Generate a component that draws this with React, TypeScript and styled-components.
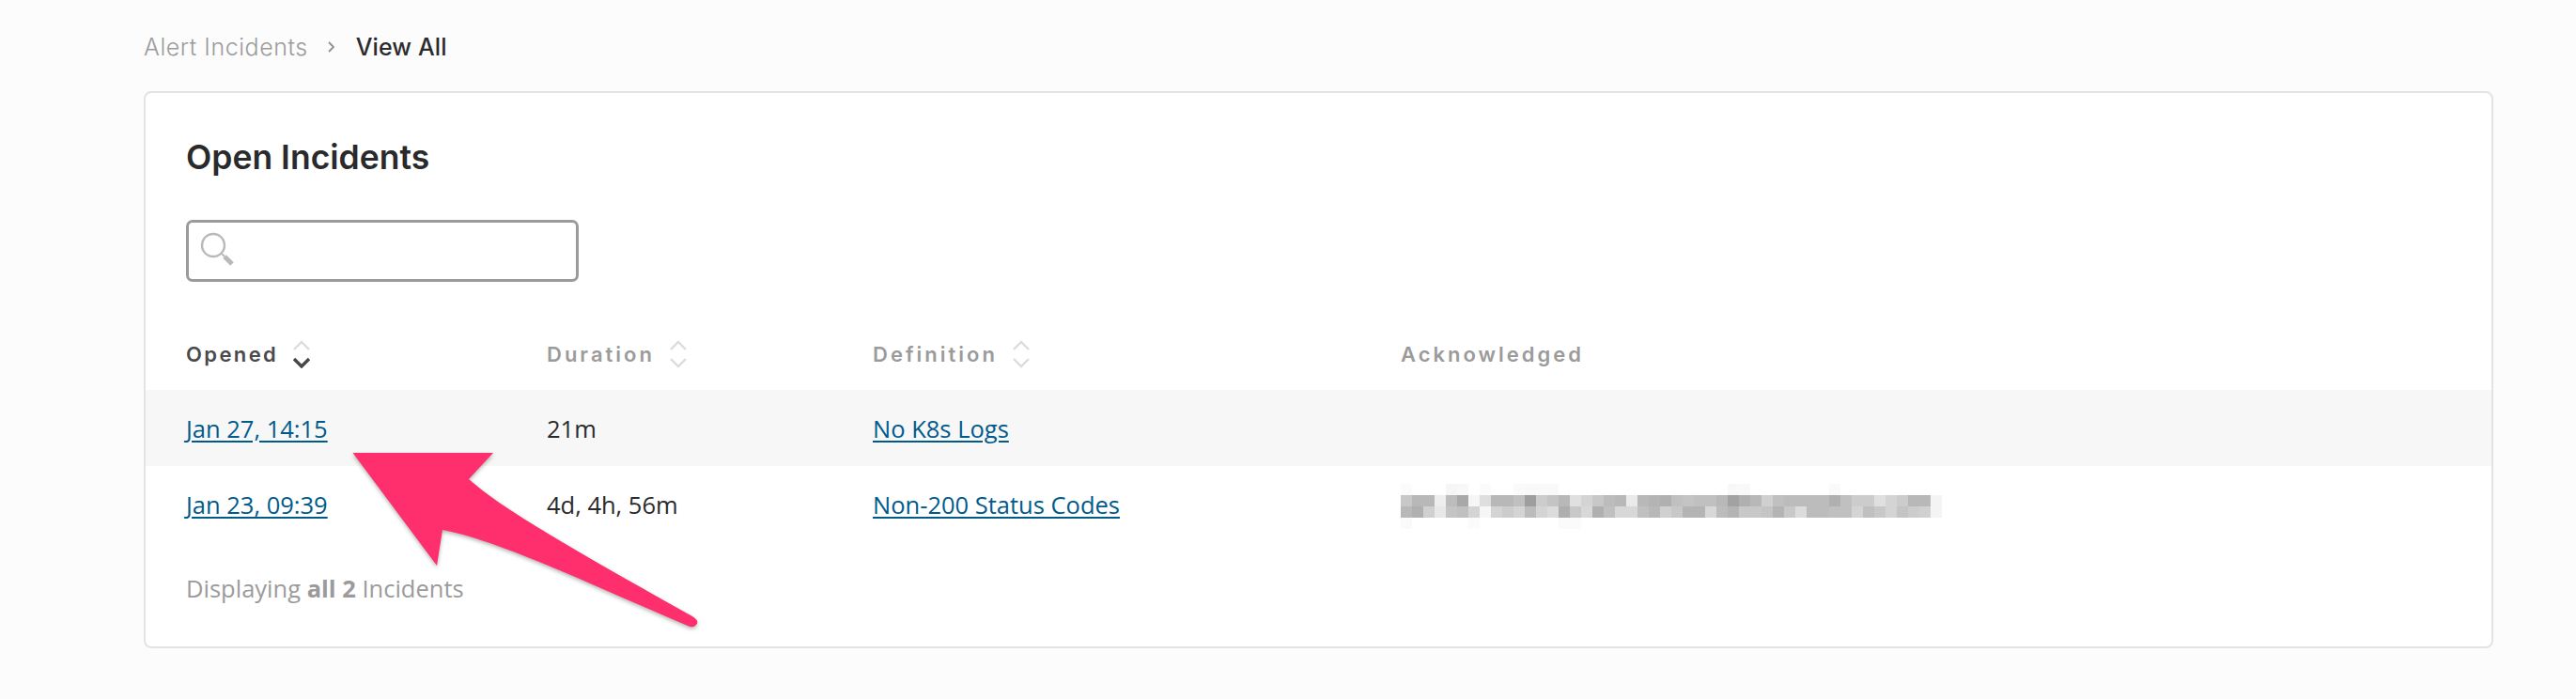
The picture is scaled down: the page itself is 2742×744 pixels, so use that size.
import React from "react";
import styled, { createGlobalStyle } from "styled-components";

const Global = createGlobalStyle`
  html, body { margin: 0; padding: 0; background: #fcfcfc; }
  body { font-family: "Open Sans", "Liberation Sans", sans-serif; color: #2a2a2c; }
`;

const Page = styled.div`
  position: relative;
  width: 2742px;
  height: 744px;
  box-sizing: border-box;
  padding: 0 88px 0 153px;
  overflow: hidden;
`;

const Breadcrumbs = styled.nav`
  display: flex;
  align-items: center;
  height: 97px;
  padding-top: 3px;
  box-sizing: border-box;
  font-family: Inter, "Liberation Sans", sans-serif;
  font-size: 25px;
`;

const Crumb = styled.span<{ $current?: boolean }>`
  color: ${(p) => (p.$current ? "#2b2b2d" : "#9b9b9b")};
  font-weight: ${(p) => (p.$current ? 500 : 300)};
  letter-spacing: ${(p) => (p.$current ? "0.1px" : "0.55px")};
`;

const Sep = styled.svg`
  margin: 0 21px 0 20px;
`;

const Card = styled.section`
  height: 593px;
  box-sizing: border-box;
  background: #fff;
  border: 2px solid #e3e3e3;
  border-radius: 8px;
`;

const Title = styled.h1`
  margin: 0;
  padding: 47px 0 0 43px;
  height: 135px;
  box-sizing: border-box;
  font-family: Inter, "Liberation Sans", sans-serif;
  font-size: 35.5px;
  line-height: 44px;
  font-weight: 600;
  color: #2a2a2c;
`;

const Search = styled.div`
  display: flex;
  align-items: center;
  width: 418px;
  height: 66px;
  margin-left: 43px;
  padding-left: 12px;
  box-sizing: border-box;
  border: 3px solid #9b9b9b;
  border-radius: 7px;
  background: #fff;
`;

const Row = styled.div<{ $shaded?: boolean; $height: number }>`
  display: grid;
  grid-template-columns: 384px 347px 562px 1fr;
  align-items: center;
  height: ${(p) => p.$height}px;
  padding-left: 43px;
  background: ${(p) => (p.$shaded ? "#f7f7f7" : "transparent")};
`;

const HeadRow = styled(Row)`
  margin-top: 48px;
  height: 67px;
  padding-bottom: 9px;
  box-sizing: border-box;
`;

const HeadCell = styled.div<{ $active?: boolean }>`
  display: flex;
  align-items: center;
  gap: 15px;
  font-family: Inter, "Liberation Sans", sans-serif;
  font-size: 22px;
  font-weight: 600;
  letter-spacing: ${(p) => (p.$active ? "2.4px" : "3px")};
  color: ${(p) => (p.$active ? "#4a4a4c" : "#9b9b9b")};
`;

const Cell = styled.div`
  font-size: 25.5px;
  color: #2a2a2c;
`;

const Link = styled.a`
  color: #005a8c;
  text-decoration: underline;
  text-underline-offset: 3px;
`;

const Footer = styled.p`
  margin: 0;
  padding: 31px 0 0 43px;
  font-size: 25.5px;
  line-height: 34px;
  color: #9b9b9b;
  b { font-weight: 700; }
`;

const Arrow = styled.svg`
  position: absolute;
  left: 0;
  top: 0;
  pointer-events: none;
  filter: drop-shadow(0 2px 2px rgba(0, 0, 0, 0.3));
`;

const Redacted = styled.svg`
  display: block;
  margin: 4px 0 0 0;
`;

const SortIcon = ({ active }: { active?: boolean }) => (
  <svg width="20" height="30" viewBox="0 0 20 30" fill="none" strokeWidth="2.4">
    <path d="M2 10 L10 2 L18 10" stroke="#dcdcdc" />
    <path d="M2 20 L10 28 L18 20" stroke={active ? "#47474a" : "#dcdcdc"} strokeWidth={active ? 3.4 : 2.4} />
  </svg>
);

const row1 = ["c8","b8","b8","ee","bc","a8","f6","de","b8","b8","c0","9e","cc","c4","b8","e0","d4","c8","bc","b8","ea","b8","b4","b0","c0","c4","c0","c0","b8","a2","b0","b8","d0","c0","bc","bc","bc","bc","b0","c0","cc","cc","e0","d4","cc","b8","b8","f4"];
const row2 = ["b8","b0","d0","e8","c4","c0","d4","f6","d4","cc","d4","bc","d4","dc","ae","c8","d8","b0","c0","d8","d8","c0","b8","d0","c8","b4","b4","d8","bc","b4","c8","c8","c4","b4","c8","dc","bc","bc","c0","c0","d4","c0","c8","d4","c4","cc","d0","f4"];
const faintTop: [number, string][] = [[0,"fb"],[4,"f6"],[5,"f8"],[7,"fb"],[10,"fa"],[11,"f9"],[12,"f9"],[13,"f9"],[29,"f8"],[30,"f9"],[38,"fa"]];
const faintBottom: [number, string][] = [[0,"fa"],[6,"fb"],[14,"fa"],[15,"fb"]];

const Blur = () => (
  <Redacted width="576" height="48" viewBox="0 0 576 48" shapeRendering="crispEdges">
    {faintTop.map(([i, c]) => <rect key={"t" + i} x={i * 12} y="0" width="12" height="12" fill={"#" + c + c + c} />)}
    {row1.map((c, i) => <rect key={"a" + i} x={i * 12} y="12" width="12" height="12" fill={"#" + c + c + c} />)}
    {row2.map((c, i) => <rect key={"b" + i} x={i * 12} y="24" width="12" height="12" fill={"#" + c + c + c} />)}
    {faintBottom.map(([i, c]) => <rect key={"f" + i} x={i * 12} y="36" width="12" height="12" fill={"#" + c + c + c} />)}
  </Redacted>
);

export default function App() {
  return (
    <>
      <Global />
      <Page>
        <Breadcrumbs>
          <Crumb>Alert Incidents</Crumb>
          <Sep width="10" height="14" viewBox="0 0 10 14" fill="none">
            <path d="M2 2 L7 7 L2 12" stroke="#8f8f8f" strokeWidth="1.8" />
          </Sep>
          <Crumb $current>View All</Crumb>
        </Breadcrumbs>
        <Card>
          <Title>Open Incidents</Title>
          <Search>
            <svg width="40" height="42" viewBox="0 0 40 42" fill="none">
              <circle cx="14" cy="15" r="12" stroke="#b9b9b9" strokeWidth="2.4" />
              <path d="M23 24 L26 27" stroke="#b9b9b9" strokeWidth="2" />
              <path d="M26 27 L34 35" stroke="#b9b9b9" strokeWidth="5" />
            </svg>
          </Search>
          <HeadRow $height={67}>
            <HeadCell $active>Opened <SortIcon active /></HeadCell>
            <HeadCell>Duration <SortIcon /></HeadCell>
            <HeadCell>Definition <SortIcon /></HeadCell>
            <HeadCell>Acknowledged</HeadCell>
          </HeadRow>
          <Row $shaded $height={81}>
            <Cell><Link href="#">Jan 27, 14:15</Link></Cell>
            <Cell>21m</Cell>
            <Cell><Link href="#">No K8s Logs</Link></Cell>
            <Cell />
          </Row>
          <Row $height={82}>
            <Cell><Link href="#">Jan 23, 09:39</Link></Cell>
            <Cell>4d, 4h, 56m</Cell>
            <Cell><Link href="#">Non-200 Status Codes</Link></Cell>
            <Cell><Blur /></Cell>
          </Row>
          <Footer>Displaying <b>all 2</b> Incidents</Footer>
        </Card>
        <Arrow width="2742" height="744" viewBox="0 0 2742 744">
          <path
            d="M375.5 482 L525 482 L499 510 C530 537 575 565 737 656 Q745 661 741 665 Q738 669 732 666 C620 618 530 575 471 564 L465 602 Z"
            fill="#ff2f6d"
          />
        </Arrow>
      </Page>
    </>
  );
}
